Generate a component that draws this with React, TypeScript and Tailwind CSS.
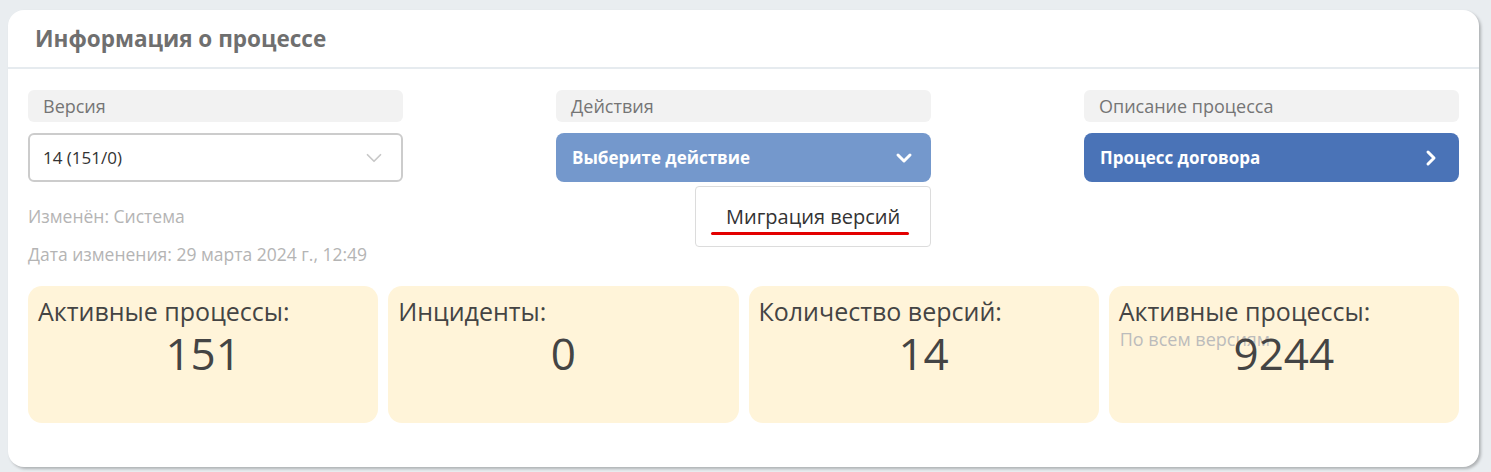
import { ChevronDown, ChevronRight } from "lucide-react";

type Stat = {
  title: string;
  value: string;
  note?: string;
};

const stats: Stat[] = [
  { title: "Активные процессы:", value: "151" },
  { title: "Инциденты:", value: "0" },
  { title: "Количество версий:", value: "14" },
  { title: "Активные процессы:", value: "9244", note: "По всем версиям" },
];

function Label({ text }: { text: string }) {
  return (
    <div className="h-[32px] rounded-md bg-[#f2f2f2] px-[15px] flex items-center text-[18px] text-[#757575]">
      {text}
    </div>
  );
}

export default function App() {
  return (
    <div
      className="w-[1491px] h-[472px] bg-[#e9edf0] pt-[10px] pl-[8px]"
      style={{ fontFamily: '"Open Sans", "Noto Sans", sans-serif' }}
    >
      <div className="w-[1471px] h-[457px] bg-white rounded-[16px] shadow-[2px_2px_3px_rgba(0,0,0,0.25)]">
        {/* Header */}
        <div className="h-[59px] px-[27px] flex items-center border-b-2 border-[#e6ebef]">
          <h1 className="text-[22.5px] font-bold text-[#6f6f6f] pt-[1px]">Информация о процессе</h1>
        </div>

        <div className="px-[20px] pt-[21px]">
          {/* Top columns */}
          <div className="flex justify-between">
            {/* Version */}
            <div className="w-[375px]">
              <Label text="Версия" />
              <div className="mt-[11px] h-[49px] rounded-md border-2 border-[#cccccc] pl-[13px] pr-[14px] flex items-center justify-between">
                <span className="text-[17px] text-[#333]">14 (151/0)</span>
                <ChevronDown size={26} strokeWidth={1.6} className="text-[#c8c8c8]" />
              </div>
              <div className="mt-[15px] text-[17.5px] text-[#b4b4b4] leading-[38px]">
                <div>Изменён: Система</div>
                <div>Дата изменения: 29 марта 2024 г., 12:49</div>
              </div>
            </div>

            {/* Actions */}
            <div className="w-[375px]">
              <Label text="Действия" />
              <div className="relative mt-[11px]">
                <div className="h-[49px] rounded-lg bg-[#7498cc] pl-[16px] pr-[15px] flex items-center justify-between">
                  <span className="text-[17px] font-bold text-white">Выберите действие</span>
                  <ChevronDown size={24} strokeWidth={3} className="text-white" />
                </div>
                <div className="absolute right-0 top-[53px] w-[236px] h-[61px] bg-white border border-[#dcdcdc] rounded-[4px] flex items-center">
                  <span className="pl-[30px] text-[20px] text-[#333]">Миграция версий</span>
                  <div className="absolute left-[15px] top-[45px] w-[198px] h-[3px] rounded-full bg-[#e30000]" />
                </div>
              </div>
            </div>

            {/* Description */}
            <div className="w-[375px]">
              <Label text="Описание процесса" />
              <div className="mt-[11px] h-[49px] rounded-lg bg-[#4a73b7] pl-[16px] pr-[16px] flex items-center justify-between">
                <span className="text-[17px] font-bold text-white">Процесс договора</span>
                <ChevronRight size={24} strokeWidth={3} className="text-white" />
              </div>
            </div>
          </div>

          {/* Stats */}
          <div className="mt-[13px] flex gap-[10px]">
            {stats.map((s, i) => (
              <div
                key={i}
                className="relative flex-1 h-[137px] rounded-[14px] bg-[#fff4d9] px-[10px] pt-[13px] text-[#444]"
              >
                <div className="text-[25px] leading-none">{s.title}</div>
                {s.note && (
                  <div className="absolute left-[11px] top-[44px] text-[18px] leading-none text-[#bcbcbc]">
                    {s.note}
                  </div>
                )}
                <div className="relative text-center text-[44px] leading-none mt-[7px]">{s.value}</div>
              </div>
            ))}
          </div>
        </div>
      </div>
    </div>
  );
}
